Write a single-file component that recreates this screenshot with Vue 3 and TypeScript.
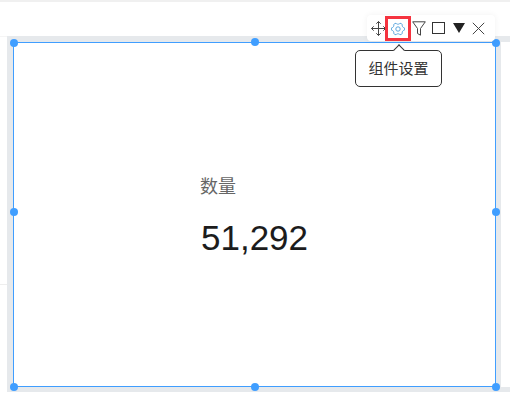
<script setup lang="ts">
const handles = ['tl', 'tc', 'tr', 'ml', 'mr', 'bl', 'bc', 'br']
</script>

<template>
  <div class="page">
    <div class="top-line"></div>
    <div class="body">
      <div class="gutter"></div>
      <div class="canvas">
        <!-- 选中的指标卡 -->
        <div class="widget">
          <div class="metric">
            <div class="metric-title">数量</div>
            <div class="metric-value">51,292</div>
          </div>
          <span v-for="h in handles" :key="h" class="handle" :class="h"></span>
        </div>
        <div class="next-widget"></div>
      </div>
    </div>

    <!-- 工具条 -->
    <div class="toolbar">
      <svg class="icon move" width="15" height="15" viewBox="0 0 15 15" fill="none" stroke="#444" stroke-width="1">
        <path d="M7.5.5v14M.5 7.5h14M5.300 2.700 7.500.5l2.200 2.200M5.300 12.300l2.200 2.200 2.200-2.200M2.700 5.300.5 7.500l2.200 2.200M12.300 5.300l2.200 2.200-2.200 2.200" />
      </svg>
      <span class="gear-box">
        <svg width="14" height="14" viewBox="0 0 14 14" fill="none" stroke="#5aa6de" stroke-width="1">
          <path d="M5 1.200c.6.900 1.200 1 2 1s1.400-.1 2-1c.9.200 1.700.7 2.300 1.300-.2 1-.1 1.600.3 2.200.4.700 1 1 2 1.300.1.500.1 1.500 0 2-1 .3-1.600.6-2 1.300-.4.600-.5 1.200-.3 2.200-.6.600-1.400 1.100-2.300 1.300-.6-.9-1.200-1-2-1s-1.400.1-2 1c-.9-.2-1.700-.7-2.300-1.300.2-1 .1-1.600-.3-2.200-.4-.7-1-1-2-1.300-.1-.5-.1-1.500 0-2 1-.3 1.600-.6 2-1.300.4-.6.5-1.200.3-2.200C3.300 1.900 4.100 1.400 5 1.200z" />
          <circle cx="7" cy="7" r="2.200" />
        </svg>
      </span>
      <svg class="icon funnel" width="14" height="15" viewBox="0 0 14 15" fill="none" stroke="#444" stroke-width="1">
        <path d="M.7.800h12.600L8.500 7.500v6.700L5.500 12.500v-5z" />
      </svg>
      <span class="square"></span>
      <span class="triangle"></span>
      <svg class="icon close" width="13" height="13" viewBox="0 0 13 13" fill="none" stroke="#444" stroke-width="1">
        <path d="M.8.800l11.400 11.400M12.200.800.800 12.200" />
      </svg>
    </div>

    <!-- 提示 -->
    <div class="tip">
      <span class="tip-arrow"></span>
      组件设置
    </div>
  </div>
</template>

<style>
html,
body {
  margin: 0;
  background: #fff;
}
</style>

<style scoped>
.page {
  position: relative;
  width: 510px;
  height: 401px;
  overflow: hidden;
  background: #fff;
  padding-top: 36px;
  box-sizing: border-box;
  font-family: "Liberation Sans", "Noto Sans CJK SC", sans-serif;
}

.top-line {
  position: absolute;
  top: 0;
  left: 0;
  right: 0;
  height: 2px;
  background: #f0f0f0;
}

.body {
  display: flex;
  align-items: flex-start;
}

.gutter {
  width: 7px;
  height: 249px;
  box-sizing: border-box;
  border-top: 1px solid #f5f5f5;
  border-bottom: 1px solid #eee;
}

.canvas {
  display: flex;
  width: 503px;
  height: 356px;
  padding: 6px 0 5px 6px;
  box-sizing: border-box;
  background: #e6e9ec;
}

.widget {
  position: relative;
  width: 483px;
  box-sizing: border-box;
  border: 1px solid #409eff;
  background: #fff;
  display: flex;
  align-items: center;
}

.next-widget {
  flex: 1;
  margin-left: 5px;
  background: #fff;
}

.metric {
  margin-left: 186px;
  margin-top: 5px;
}

.metric-title {
  font-size: 18px;
  line-height: 26px;
  color: #666;
}

.metric-value {
  margin-left: 1px;
  margin-top: 16px;
  font-size: 35px;
  line-height: 44px;
  color: #1c1c1c;
}

.handle {
  position: absolute;
  width: 8px;
  height: 8px;
  margin: -0.5px 0 0 -0.5px;
  border-radius: 50%;
  background: #409eff;
  transform: translate(-50%, -50%);
}
.tl { left: 0; top: 0; }
.tc { left: calc(50% + 1px); top: -1px; }
.tr { left: calc(100% + 1px); top: 0; }
.ml { left: 0; top: calc(50% - 2px); }
.mr { left: calc(100% + 1px); top: calc(50% - 2px); }
.bl { left: 0; top: calc(100% + 1px); }
.bc { left: calc(50% + 1px); top: calc(100% + 1px); }
.br { left: calc(100% + 1px); top: calc(100% + 1px); }

.toolbar {
  position: absolute;
  left: 367px;
  top: 15px;
  width: 128px;
  height: 26px;
  display: flex;
  align-items: center;
  padding-left: 4px;
  box-sizing: border-box;
  background: #fff;
  border-radius: 4px;
  box-shadow: 0 0 6px rgba(0, 0, 0, 0.06);
}

.gear-box {
  width: 26px;
  height: 25px;
  margin-left: -1px;
  margin-top: 1px;
  box-sizing: border-box;
  border: 3px solid #f5333f;
  display: flex;
  align-items: center;
  justify-content: center;
}

.icon {
  flex-shrink: 0;
}

.funnel {
  margin-left: 1px;
}

.square {
  width: 13px;
  height: 12px;
  box-sizing: border-box;
  border: 1px solid #333;
  margin-left: 6px;
}

.triangle {
  width: 0;
  height: 0;
  margin-left: 8px;
  border-left: 6px solid transparent;
  border-right: 6px solid transparent;
  border-top: 10px solid #222;
}

.close {
  margin-left: 7px;
}

.tip {
  position: absolute;
  left: 355px;
  top: 50px;
  width: 87px;
  height: 37px;
  box-sizing: border-box;
  border: 1px solid #333;
  border-radius: 5px;
  background: #fff;
  font-size: 15px;
  line-height: 35px;
  text-align: center;
  color: #333;
}

.tip-arrow {
  position: absolute;
  left: 39px;
  top: -5px;
  width: 8px;
  height: 8px;
  box-sizing: border-box;
  background: #fff;
  border-left: 1px solid #333;
  border-top: 1px solid #333;
  transform: rotate(45deg);
}
</style>
